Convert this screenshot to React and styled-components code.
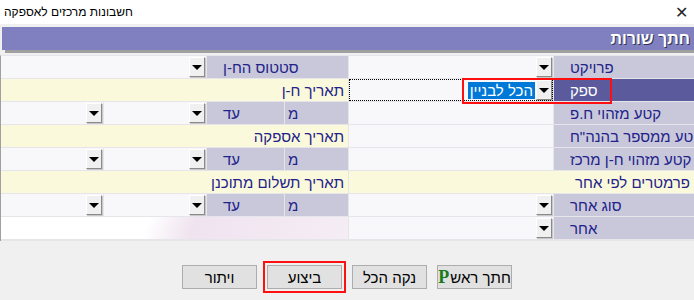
import React from 'react';
import styled, { createGlobalStyle, css } from 'styled-components';

const GlobalStyle = createGlobalStyle`
  html, body {
    margin: 0;
    padding: 0;
    background: #f0f0f0;
  }
  body {
    font-family: 'Liberation Sans', Arial, sans-serif;
  }
`;

const Window = styled.div`
  width: 694px;
  height: 300px;
  background: #f0f0f0;
  overflow: hidden;
  position: relative;
`;

const TitleBar = styled.div`
  height: 24px;
  background: #fff;
  display: flex;
  align-items: center;
  justify-content: space-between;
  padding: 0 6px 0 4px;
  font-size: 12px;
  color: #000;
`;

const CloseX = styled.span`
  font-size: 16px;
  font-weight: 300;
  color: #222;
  font-family: 'DejaVu Sans', sans-serif;
`;

const Header = styled.div`
  margin: 3px 0 0 2px;
  height: 23px;
  background: #8080c0;
  box-shadow: 3px 3px 0 #a0a0a0;
  display: flex;
  align-items: center;
  justify-content: flex-end;
  padding-right: 4px;
  color: #fff;
  font-size: 16px;
  font-weight: bold;
  text-shadow: 1px 1px 0 #303050;
`;

const Grid = styled.div`
  position: relative;
  margin-top: 5px;
  direction: ltr;
  display: grid;
  grid-template-columns: 102px 102px 77px 63px 204px 140px;
  grid-auto-rows: 22px;
  gap: 1px;
  background: #e6e6ea;
  border-left: 1px solid #a0a0a0;
  border-top: 1px solid #e6e6ea;
  padding-bottom: 2px;
`;

const Cell = styled.div`
  grid-column: ${p => p.$col || 'auto'};
  background: #f8f8fa;
  display: flex;
  align-items: center;
  overflow: hidden;
  white-space: nowrap;
  font-size: 15px;
  position: relative;
`;

const LabelCell = styled(Cell)`
  background: ${p => (p.$selected ? '#5a5a9c' : '#c8c8da')};
  color: ${p => (p.$selected ? '#fff' : '#22228a')};
  padding-left: ${p => p.$pad || 16}px;
  justify-content: flex-start;
`;

const YellowCell = styled(Cell)`
  background: #fbf9dc;
  color: #22228a;
  justify-content: flex-end;
  padding-right: 4px;
`;

const BlankCell = styled(Cell)`
  background: ${p => p.$fade
    ? 'linear-gradient(110deg, #fff 42%, #efe3ef 55%, #f5edf5 100%)'
    : '#f8f8fa'};
`;

const ComboCell = styled(Cell)`
  justify-content: flex-end;
  padding-right: 1px;
  ${p => p.$focused && css`
    outline: 1px dotted #000;
    outline-offset: -1px;
  `}
`;

const Heb = styled.span`
  direction: rtl;
  unicode-bidi: embed;
`;

const Picked = styled.span`
  direction: rtl;
  background: #0078d7;
  color: #fff;
  padding: 0 2px;
  height: 17px;
  line-height: 17px;
  margin-right: 1px;
`;

const DropButton = styled.span`
  width: 14px;
  height: 18px;
  background: #f0f0f0;
  border: 1px solid;
  border-color: #fff #8a8a8a #8a8a8a #fff;
  box-shadow: 1px 1px 0 #c8c8c8;
  display: flex;
  align-items: center;
  justify-content: center;
  &::after {
    content: '';
    border-left: 5px solid transparent;
    border-right: 5px solid transparent;
    border-top: 5px solid #000;
    margin-top: 1px;
  }
`;

const RedMark = styled.div`
  position: absolute;
  left: 461px;
  top: 22px;
  width: 146px;
  height: 22px;
  border: 2px solid #ff1010;
  pointer-events: none;
`;

const Buttons = styled.div`
  display: flex;
  justify-content: center;
  gap: 10px;
  margin-top: 24px;
  direction: ltr;
`;

const Button = styled.button`
  width: 75px;
  height: 24px;
  background: #e1e1e1;
  border: 1px solid #adadad;
  font-family: 'Liberation Sans', Arial, sans-serif;
  font-size: 15px;
  color: #000;
  direction: rtl;
  display: flex;
  align-items: center;
  justify-content: center;
  gap: 1px;
  padding: 0;
  ${p => p.$marked && css`
    outline: 2px solid #ff1010;
    outline-offset: 2px;
  `}
`;

const GreenP = styled.span`
  color: #1b7a1b;
  font-family: 'Liberation Serif', serif;
  font-weight: bold;
  font-size: 18px;
`;

const Combo = ({ col, focused, children }) => (
  <ComboCell $col={col} $focused={focused}>
    {children}
    <DropButton />
  </ComboCell>
);

const Label = ({ col, selected, pad, children }) => (
  <LabelCell $col={col} $selected={selected} $pad={pad}>
    <Heb>{children}</Heb>
  </LabelCell>
);

const RangeRow = ({ label, combo }) => (
  <>
    <Combo col="1" />
    <Combo col="2" />
    <Label col="3">עד</Label>
    <Label col="4" pad={3}>מ</Label>
    {combo ? <Combo col="5" /> : <BlankCell $col="5" />}
    <Label col="6">{label}</Label>
  </>
);

const App = () => {
  return (
    <Window>
      <GlobalStyle />
      <TitleBar>
        <span>חשבונות מרכזים לאספקה</span>
        <CloseX>✕</CloseX>
      </TitleBar>
      <Header>חתך שורות</Header>
      <Grid>
        <Combo col="1 / 3" />
        <Label col="3 / 5">סטטוס הח-ן</Label>
        <Combo col="5" />
        <Label col="6">פרויקט</Label>

        <YellowCell $col="1 / 5"><Heb>תאריך ח-ן</Heb></YellowCell>
        <Combo col="5" focused>
          <Picked>הכל לבניין</Picked>
        </Combo>
        <Label col="6" selected>ספק</Label>

        <RangeRow label="קטע מזהוי ח.פ" />

        <YellowCell $col="1 / 5"><Heb>תאריך אספקה</Heb></YellowCell>
        <BlankCell $col="5" />
        <Label col="6">קטע ממספר בהנה"ח</Label>

        <RangeRow label="קטע מזהוי ח-ן מרכז" />

        <YellowCell $col="1 / 5"><Heb>תאריך תשלום מתוכנן</Heb></YellowCell>
        <YellowCell $col="5 / 7"><Heb>פרמטרים לפי אחר</Heb></YellowCell>

        <RangeRow label="סוג אחר" combo />

        <BlankCell $col="1 / 5" $fade />
        <Combo col="5" />
        <Label col="6">אחר</Label>

        <RedMark />
      </Grid>
      <Buttons>
        <Button>ויתור</Button>
        <Button $marked>ביצוע</Button>
        <Button>נקה הכל</Button>
        <Button>חתך ראש<GreenP>P</GreenP></Button>
      </Buttons>
    </Window>
  );
};

export default App;
